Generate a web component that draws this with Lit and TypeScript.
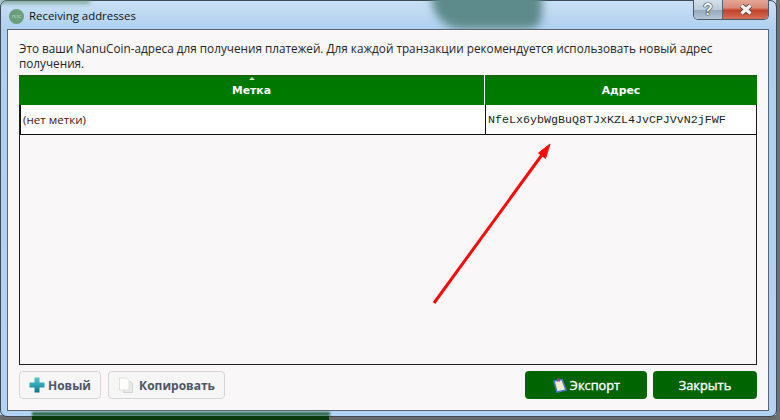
import { LitElement, html, css } from "lit";
import { customElement } from "lit/decorators.js";

@customElement("app-root")
export class AppRoot extends LitElement {
  static styles = css`
    :host { display: block; width: 780px; height: 420px; font-family: "DejaVu Sans", sans-serif; }
    .window {
      position: relative; width: 780px; height: 420px; overflow: hidden; box-sizing: border-box;
      display: flex; flex-direction: column;
      background: linear-gradient(180deg, #c4dcf2 0%, #aecfef 8%, #b4d5f5 100%);
    }
    .blob-top { position: absolute; left: 432px; top: -20px; width: 110px; height: 49px; background: #5d8a8b; filter: blur(4px); border-radius: 0 0 14px 30px; }
    .blob-top2 { position: absolute; left: 0; top: 0; width: 90px; height: 3px; background: #5f8f72; filter: blur(2px); }
    .edge-right { position: absolute; right: 0; top: 0; bottom: 0; width: 4px; background: #6f7170; }
    .outer { position: absolute; inset: 0 3px 3px 0; border: 1px solid #3f4a55; border-radius: 7px; background: linear-gradient(180deg, #c9e0f5 0%, #aed0f0 7%, #b2d3f3 100%); box-sizing: border-box; }
    .shadow-bottom { position: absolute; left: 0; right: 0; bottom: 0; height: 5px; background: #6a6a6a; }
    .green-bot { position: absolute; left: 32px; top: 412px; width: 298px; height: 4px; background: #2f6a45; filter: blur(1px); }
    .green-bot2 { position: absolute; left: 32px; top: 416px; width: 297px; height: 4px; background: #0a3a0c; }
    .titlebar { position: relative; height: 29px; flex: none; display: flex; align-items: center; padding: 0 0 0 9px; gap: 5px; box-sizing: border-box; }
    .appicon { width: 15px; height: 15px; border-radius: 50%; background: #6b9e7b; color: #b4d0bc; font-size: 6px; display: flex; align-items: center; justify-content: center; font-family: "Liberation Sans", sans-serif; margin-top: 3px; }
    .title { font-size: 11.4px; color: #111; font-family: "Open Sans", sans-serif; margin-top: 1px; }
    .ctrls { position: absolute; left: 693px; top: 0; width: 76px; height: 20px; display: flex; border: 1px solid #4c5a66; border-top: none; border-radius: 0 0 5px 5px; overflow: hidden; box-sizing: border-box; }
    .help { width: 28px; display: flex; align-items: center; justify-content: center; background: linear-gradient(180deg, #d3e0ec 0%, #bccbd9 50%, #93a8bb 52%, #b5c6d6 100%); color: #f8f8f8; font: bold 16px "Liberation Sans", sans-serif; text-shadow: 0 0 1px #222, 0 0 1px #222, 0 0 1px #222; border-right: 1px solid #5a6570; }
    .close { flex: 1; display: flex; align-items: center; justify-content: center; background: linear-gradient(180deg, #e6a797 0%, #d98b78 40%, #c2412b 55%, #d5705a 100%); }
    .client {
      position: relative; flex: 1; margin: 0 11px 9px 7px; background: #f9f7f8; border: 1px solid #5d6670;
      box-sizing: border-box; padding: 11px 11px 11px 11px; display: flex; flex-direction: column; min-height: 0;
    }
    .intro { margin: 0 0 5px; font-size: 11.75px; line-height: 14.5px; color: #262626; font-family: "Open Sans", sans-serif; height: 29px; }
    .table { flex: 1; border: 1px solid #1f1f1f; border-top: none; display: flex; flex-direction: column; min-height: 0; }
    .thead { display: grid; grid-template-columns: 465px 1fr; height: 30px; background: linear-gradient(180deg, #1f5a10 0%, #007700 8%, #007a00 100%); margin: 0 -1px; flex: none; }
    .th { position: relative; display: flex; align-items: center; justify-content: center; color: #fff; font-size: 10.8px; font-weight: bold; padding-top: 1px; }
    .th + .th { border-left: 1px solid #e8f2e8; }
    .sort { position: absolute; left: 50%; top: 2px; margin-left: -3px; width: 0; height: 0; border: 3px solid transparent; border-top: none; border-bottom: 3px solid #cfe0cf; }
    .row { display: grid; grid-template-columns: 464px 1fr; height: 29px; background: #fff; border-bottom: 1px solid #111; flex: none; border-left: 1px solid #111; }
    .td { display: flex; align-items: center; padding-left: 2px; font: 11.6px "Open Sans", sans-serif; color: #4a1414; box-sizing: border-box; }
    .td + .td { border-left: 1px solid #111; font: 11.67px "Liberation Mono", monospace; color: #222; }
    .actions { display: flex; gap: 7px; height: 28px; margin-top: 6px; flex: none; }
    .btn { height: 28px; box-sizing: border-box; border: 1px solid #d6d6d6; border-radius: 4px; background: #f6f6f6; color: #4d5568; font-size: 12px; font-weight: bold; font-family: "Open Sans", sans-serif; display: flex; align-items: center; justify-content: center; gap: 3px; padding: 0; }
    .new { width: 82px; }
    .copy { width: 117px; }
    .primary { background: #006400; color: #fff; border: none; border-radius: 4px; font-size: 12.8px; font-weight: normal; -webkit-text-stroke: 0.35px #fff; }
    .spacer { flex: 1; }
    .export { width: 122px; margin-right: -1px; }
    .closebtn { width: 104px; }
    .arrow { position: absolute; left: 0; top: 0; pointer-events: none; }
  `;

  render() {
    return html`
      <div class="window">
        <div class="shadow-bottom"></div>
        <div class="edge-right"></div>
        <div class="outer"></div>
        <div class="blob-top"></div>
        <div class="blob-top2"></div>
        <div class="green-bot"></div>
        <div class="green-bot2"></div>
        <div class="titlebar">
          <div class="appicon">nnc</div>
          <div class="title">Receiving addresses</div>
          <div class="ctrls">
            <div class="help">?</div>
            <div class="close">
              <svg width="14" height="11" viewBox="0 0 14 11">
                <path d="M2.500 1.500 L11.500 9.500 M11.500 1.500 L2.500 9.500" stroke="#4a3a3a" stroke-width="5" fill="none" />
                <path d="M2.500 1.500 L11.500 9.500 M11.500 1.500 L2.500 9.500" stroke="#f4f0ee" stroke-width="3.400" fill="none" />
              </svg>
            </div>
          </div>
        </div>
        <div class="client">
          <p class="intro">Это ваши NanuCoin-адреса для получения платежей. Для каждой транзакции рекомендуется использовать новый адрес получения.</p>
          <div class="table">
            <div class="thead">
              <div class="th"><span class="sort"></span>Метка</div>
              <div class="th">Адрес</div>
            </div>
            <div class="row">
              <div class="td">(нет метки)</div>
              <div class="td">NfeLx6ybWgBuQ8TJxKZL4JvCPJVvN2jFWF</div>
            </div>
          </div>
          <div class="actions">
            <button class="btn new">
              <svg width="16" height="16" viewBox="0 0 16 16">
                <defs><linearGradient id="p" x1="0" y1="0" x2="0" y2="1"><stop offset="0" stop-color="#5cc6c8"/><stop offset="0.55" stop-color="#2aa0b4"/><stop offset="1" stop-color="#0e6f8e"/></linearGradient></defs>
                <path d="M5.500 0.500h5v5h5v5h-5v5h-5v-5h-5v-5h5z" fill="url(#p)"/>
              </svg>
              Новый
            </button>
            <button class="btn copy">
              <svg width="16" height="16" viewBox="0 0 16 16" style="margin-right:2px">
                <path d="M5.500 4.500h7l2 2v9h-9z" fill="#e9e9e6" stroke="#d5d5d2"/>
                <path d="M1.500 1h7l2.500 2.500v9.500h-9.500z" fill="#fdfdfb" stroke="#e0e0dd"/>
              </svg>
              Копировать
            </button>
            <div class="spacer"></div>
            <button class="btn primary export">
              <svg width="15" height="15" viewBox="0 0 15 15">
                <path d="M2 3 L10 1.500 L14 12 L5 14 Z" fill="#f2ead2" stroke="#4a78c8" stroke-width="1.500"/>
                <rect x="5" y="0.500" width="3" height="3" fill="#a8389a"/>
              </svg>
              Экспорт
            </button>
            <button class="btn primary closebtn">Закрыть</button>
          </div>
        </div>
        <svg class="arrow" width="780" height="420" viewBox="0 0 780 420">
          <path d="M434 303 L544 152" stroke="#fa0a0a" stroke-width="3" fill="none" />
          <path d="M550 144 L538.500 153 L545.500 158.500 Z" fill="#fa0a0a" stroke="#fa0a0a" stroke-linejoin="round"/>
        </svg>
      </div>
    `;
  }
}
